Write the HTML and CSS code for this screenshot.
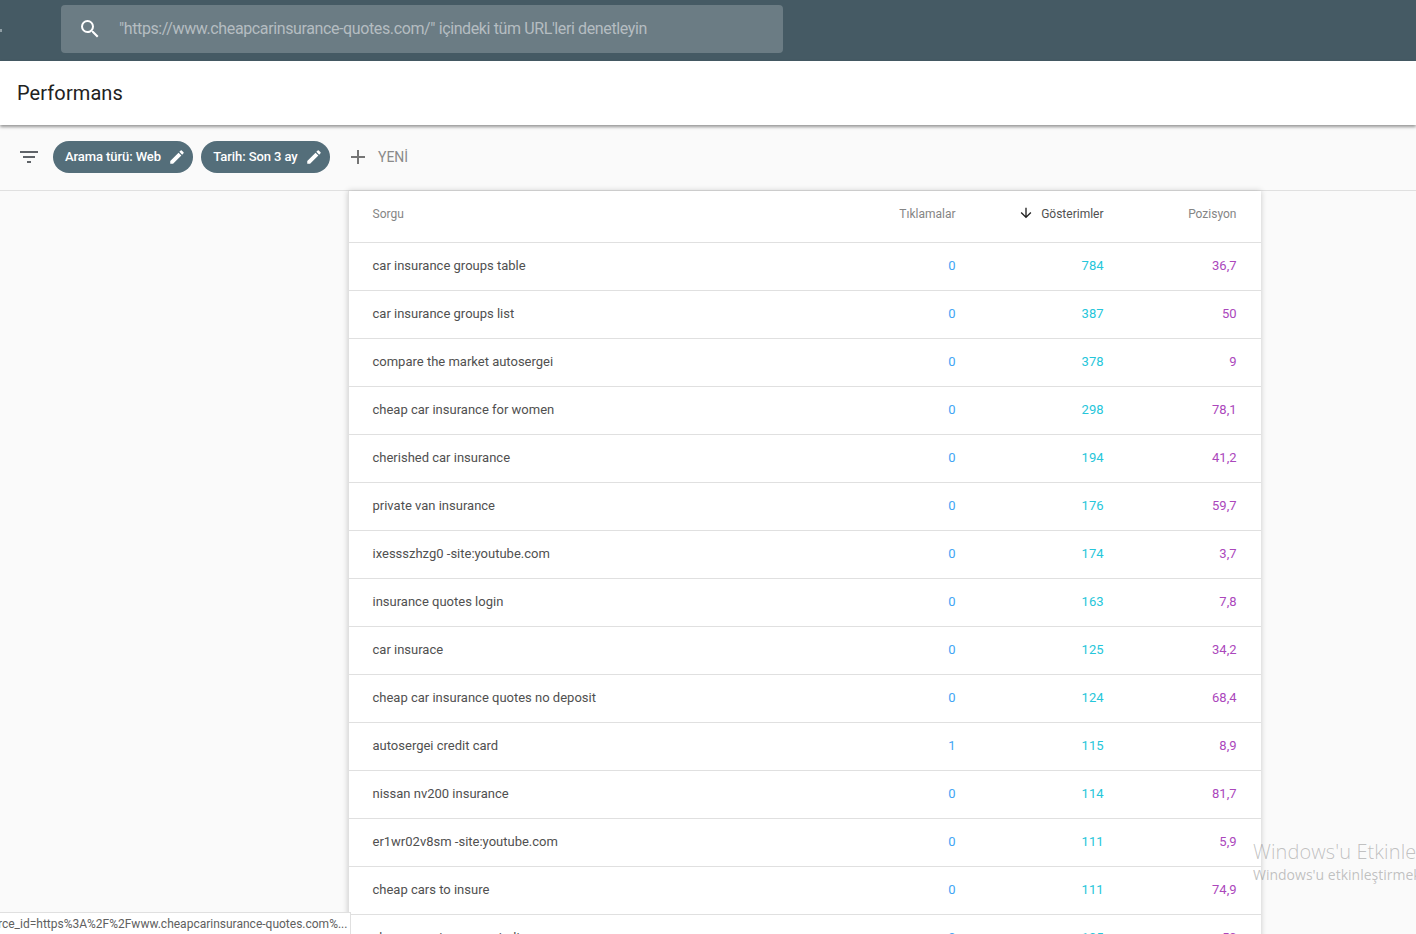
FILE: index.html
```html
<!DOCTYPE html>
<html lang="tr">
<head>
    <meta charset="UTF-8">
    <title>Performans</title>
    <link rel="stylesheet" href="styles.css">
</head>
<body>
    <header class="topbar">
        <span class="menu-edge"></span>
        <div class="search">
            <svg class="search-icon" width="24" height="24" viewBox="0 0 24 24"><path fill="#fff" d="M15.5 14h-.79l-.28-.27A6.47 6.47 0 0 0 16 9.5 6.5 6.5 0 1 0 9.5 16c1.61 0 3.09-.59 4.23-1.57l.27.28v.79l5 4.99L20.49 19l-4.99-5zm-6 0C7.01 14 5 11.99 5 9.5S7.01 5 9.5 5 14 7.01 14 9.5 11.99 14 9.5 14z"/></svg>
            <span class="search-text">"https://www.cheapcarinsurance-quotes.com/" içindeki tüm URL'leri denetleyin</span>
        </div>
    </header>

    <div class="titlebar"><h1>Performans</h1></div>

    <div class="filters">
        <svg class="filter-icon" width="24" height="24" viewBox="0 0 24 24"><path fill="#5f6368" d="M10 18h4v-2h-4v2zM3 6v2h18V6H3zm3 7h12v-2H6v2z"/></svg>
        <span class="chip">Arama türü: Web
            <svg width="18" height="18" viewBox="0 0 24 24"><path fill="#fff" d="M3 17.25V21h3.75L17.81 9.94l-3.75-3.75L3 17.25zM20.71 7.04a1 1 0 0 0 0-1.41l-2.34-2.34a1 1 0 0 0-1.41 0l-1.83 1.83 3.75 3.75 1.83-1.83z"/></svg>
        </span>
        <span class="chip">Tarih: Son 3 ay
            <svg width="18" height="18" viewBox="0 0 24 24"><path fill="#fff" d="M3 17.25V21h3.75L17.81 9.94l-3.75-3.75L3 17.25zM20.71 7.04a1 1 0 0 0 0-1.41l-2.34-2.34a1 1 0 0 0-1.41 0l-1.83 1.83 3.75 3.75 1.83-1.83z"/></svg>
        </span>
        <span class="new">
            <svg width="24" height="24" viewBox="0 0 24 24"><path fill="#757575" d="M19 13h-6v6h-2v-6H5v-2h6V5h2v6h6v2z"/></svg>
            YENİ
        </span>
    </div>

    <main class="content">
        <div class="card">
            <div class="row head">
                <div class="query">Sorgu</div>
                <div class="num">Tıklamalar</div>
                <div class="num sorted">
                    <svg width="16" height="16" viewBox="0 0 24 24"><path fill="#212121" d="M20 12l-1.41-1.41L13 16.17V4h-2v12.17l-5.58-5.59L4 12l8 8 8-8z"/></svg>
                    Gösterimler
                </div>
                <div class="num">Pozisyon</div>
            </div>
            <div class="row"><div class="query">car insurance groups table</div><div class="num clicks">0</div><div class="num views">784</div><div class="num pos">36,7</div></div>
            <div class="row"><div class="query">car insurance groups list</div><div class="num clicks">0</div><div class="num views">387</div><div class="num pos">50</div></div>
            <div class="row"><div class="query">compare the market autosergei</div><div class="num clicks">0</div><div class="num views">378</div><div class="num pos">9</div></div>
            <div class="row"><div class="query">cheap car insurance for women</div><div class="num clicks">0</div><div class="num views">298</div><div class="num pos">78,1</div></div>
            <div class="row"><div class="query">cherished car insurance</div><div class="num clicks">0</div><div class="num views">194</div><div class="num pos">41,2</div></div>
            <div class="row"><div class="query">private van insurance</div><div class="num clicks">0</div><div class="num views">176</div><div class="num pos">59,7</div></div>
            <div class="row"><div class="query">ixessszhzg0 -site:youtube.com</div><div class="num clicks">0</div><div class="num views">174</div><div class="num pos">3,7</div></div>
            <div class="row"><div class="query">insurance quotes login</div><div class="num clicks">0</div><div class="num views">163</div><div class="num pos">7,8</div></div>
            <div class="row"><div class="query">car insurace</div><div class="num clicks">0</div><div class="num views">125</div><div class="num pos">34,2</div></div>
            <div class="row"><div class="query">cheap car insurance quotes no deposit</div><div class="num clicks">0</div><div class="num views">124</div><div class="num pos">68,4</div></div>
            <div class="row"><div class="query">autosergei credit card</div><div class="num clicks">1</div><div class="num views">115</div><div class="num pos">8,9</div></div>
            <div class="row"><div class="query">nissan nv200 insurance</div><div class="num clicks">0</div><div class="num views">114</div><div class="num pos">81,7</div></div>
            <div class="row"><div class="query">er1wr02v8sm -site:youtube.com</div><div class="num clicks">0</div><div class="num views">111</div><div class="num pos">5,9</div></div>
            <div class="row"><div class="query">cheap cars to insure</div><div class="num clicks">0</div><div class="num views">111</div><div class="num pos">74,9</div></div>
            <div class="row"><div class="query">cheap cars insurance india</div><div class="num clicks">0</div><div class="num views">105</div><div class="num pos">50</div></div>
        </div>
    </main>

    <div class="status-link">rce_id=https%3A%2F%2Fwww.cheapcarinsurance-quotes.com%...</div>
    <div class="watermark">
        <div class="wm-title">Windows'u Etkinleştir</div>
        <div class="wm-sub">Windows'u etkinleştirmek için Ayarlar'a gidin.</div>
    </div>
</body>
</html>
```

FILE: styles.css
```css
html, body {
    height: 100%;
    overflow: hidden;
}
body {
    margin: 0;
    background: #fafafa;
    font-family: Roboto, "Liberation Sans", sans-serif;
    color: #505050;
    position: relative;
}
.topbar {
    height: 61px;
    background: #455a64;
    padding: 5px 0 0 61px;
    box-sizing: border-box;
}
.menu-edge {
    position: absolute;
    left: 0;
    top: 29px;
    width: 2px;
    height: 3px;
    background: #8f9ea5;
}
.search {
    width: 722px;
    height: 48px;
    background: #6b7c84;
    border-radius: 4px;
    display: flex;
    align-items: center;
    padding-left: 17px;
    box-sizing: border-box;
}
.search-icon {
    flex: none;
}
.search-text {
    margin: 0 0 2px 17px;
    font-size: 16px;
    letter-spacing: -0.38px;
    color: #b5bdc1;
    white-space: nowrap;
}
.titlebar {
    height: 64px;
    background: #fff;
    display: flex;
    align-items: center;
    padding-left: 17px;
    box-shadow: 0 2px 3px rgba(0, 0, 0, 0.4);
    position: relative;
}
.titlebar h1 {
    margin: 0;
    font-size: 20px;
    font-weight: 400;
    letter-spacing: 0.1px;
    color: #212121;
}
.filters {
    height: 63px;
    display: flex;
    align-items: center;
    padding: 0 0 2px 17px;
    border-bottom: 1px solid #e0e0e0;
}
.filter-icon {
    margin-right: 12px;
}
.chip {
    height: 32px;
    background: #546e7a;
    border-radius: 16px;
    display: flex;
    align-items: center;
    gap: 7px;
    padding: 0 7.4px 0 12px;
    margin-right: 8px;
    font-size: 13px;
    font-weight: 500;
    letter-spacing: -0.08px;
    color: #fff;
    white-space: nowrap;
}
.new {
    display: flex;
    align-items: center;
    gap: 8px;
    margin-left: 8px;
    font-size: 14px;
    color: #8a8a8a;
}
.content {
    display: flex;
    padding-left: 348px;
}
.card {
    width: 912px;
    background: #fff;
    border-left: 1px solid #e0e0e0;
    box-shadow: 0 0 6px rgba(0, 0, 0, 0.2);
}
.row {
    height: 45px;
    border-bottom: 1px solid #e0e0e0;
    display: flex;
    align-items: center;
    padding: 0 24.5px 2px 23.5px;
    font-size: 13px;
}
.head {
    height: 45px;
    padding-bottom: 6px;
    font-size: 12px;
    color: #858585;
}
.query {
    flex: 1;
}
.num {
    text-align: right;
    width: 148px;
}
.num:last-child {
    width: 133px;
}
.sorted {
    color: #505050;
    display: flex;
    justify-content: flex-end;
    align-items: center;
    gap: 7px;
}
.sorted svg {
    margin-top: -2px;
}
.clicks {
    color: #42a5f5;
}
.views {
    color: #26c6da;
}
.pos {
    color: #ab47bc;
}
.status-link {
    position: absolute;
    left: 0;
    bottom: 0;
    width: 351px;
    height: 22px;
    box-sizing: border-box;
    background: #fff;
    border-top: 1px solid #e0e0e0;
    border-right: 1px solid #e0e0e0;
    font-size: 12px;
    line-height: 23px;
    color: #606060;
    text-indent: -2px;
    white-space: nowrap;
    overflow: hidden;
}
.watermark {
    position: absolute;
    left: 1253px;
    top: 838px;
    font-family: "Open Sans", "Noto Sans", sans-serif;
    color: rgba(120, 120, 120, 0.45);
    white-space: nowrap;
}
.wm-title {
    font-size: 20px;
    font-weight: 300;
    letter-spacing: 0.1px;
}
.wm-sub {
    font-size: 14px;
}
```
